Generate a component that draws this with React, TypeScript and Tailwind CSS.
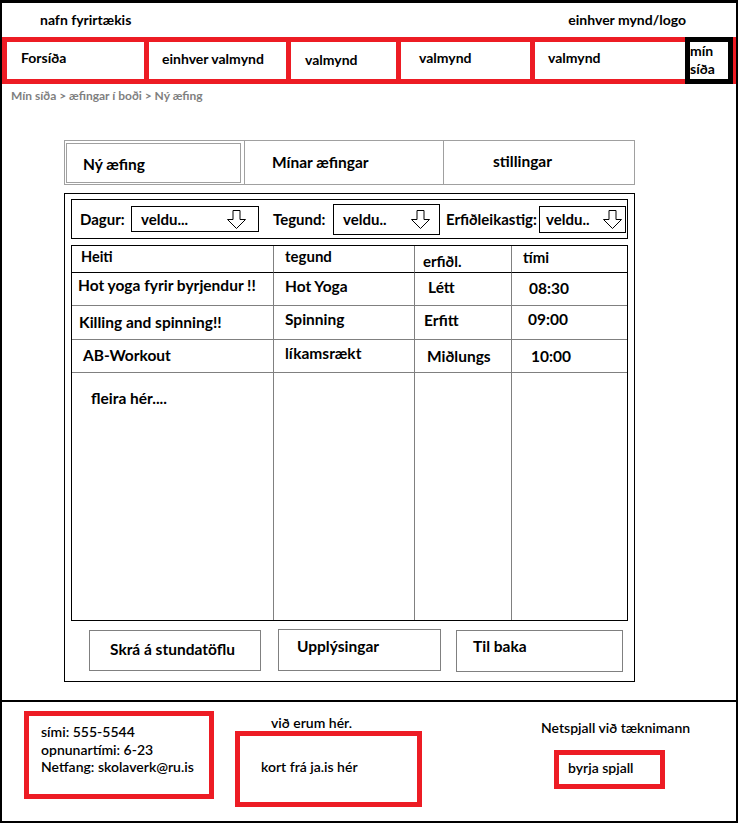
import React from "react";

function Arrow() {
  return (
    <svg width="19" height="19" viewBox="0 0 19 19" className="shrink-0">
      <polygon
        points="6,0.5 13,0.5 13,9.5 18.5,9.5 9.5,18.5 0.5,9.5 6,9.5"
        fill="white"
        stroke="black"
        strokeWidth="1"
      />
    </svg>
  );
}

type CellProps = { text?: string; cls: string };
function Cell({ text, cls }: CellProps) {
  return <div className={cls}>{text}</div>;
}

export default function App() {
  return (
    <div className="[font-family:Lato,sans-serif] font-bold text-black bg-white w-[738px] h-[823px] border-x-2 border-t-[3px] border-b-2 border-black flex flex-col text-[14px] leading-[18px]">
      {/* header */}
      <div className="h-[34px] flex items-center justify-between pl-[38px] pr-[50px]">
        <span>nafn fyrirtækis</span>
        <span>einhver mynd/logo</span>
      </div>

      {/* nav */}
      <nav className="h-[47px] bg-[#ed1c24] flex pl-[5px] pr-[3px]">
        <div className="my-[5px] w-[137px] bg-white pl-[14px] pt-[7px]">Forsíða</div>
        <div className="my-[5px] ml-[5px] w-[137px] bg-white pl-[13px] pt-[8px]">einhver valmynd</div>
        <div className="my-[5px] ml-[5px] w-[105px] bg-white pl-[14px] pt-[9px]">valmynd</div>
        <div className="my-[5px] ml-[5px] w-[129px] bg-white pl-[18px] pt-[7px]">valmynd</div>
        <div className="my-[5px] ml-[5px] w-[150px] bg-white pl-[13px] pt-[7px]">valmynd</div>
        <div className="w-[48px] bg-white border-[5px] border-black leading-[18px]">
          mín
          <br />
          síða
        </div>
      </nav>

      {/* breadcrumb */}
      <div className="mt-[4px] pl-[9px] text-[12px] leading-[16px] text-[#7f7f7f]">
        Mín síða &gt; æfingar í boði &gt; Ný æfing
      </div>

      {/* tabs */}
      <div className="mt-[36px] ml-[62px] w-[571px] h-[45px] border border-[#a0a0a0] flex shrink-0 text-[15.5px]">
        <div className="w-[179px] pl-[1px] pt-[2px] pb-[1px] pr-[3px] flex">
          <div className="flex-1 border border-[#a0a0a0] flex items-center pl-[16px] pt-[1px]">Ný æfing</div>
        </div>
        <div className="w-[199px] border-l border-[#a0a0a0] flex items-center pl-[27px] pb-[2px]">Mínar æfingar</div>
        <div className="flex-1 border-l border-[#a0a0a0] flex items-center pl-[49px] pb-[4px]">stillingar</div>
      </div>

      {/* main panel */}
      <div className="mt-[8px] ml-[62px] w-[571px] h-[489px] border border-black px-[6px] pt-[5px] flex flex-col shrink-0">
        {/* filters */}
        <div className="h-[40px] border border-black flex items-center shrink-0 text-[15px]">
          <div className="w-[59px] pl-[8px]">Dagur:</div>
          <div className="w-[128px] h-[26px] border border-black flex items-center justify-between pl-[9px] pr-[12px]">
            <span>veldu...</span>
            <Arrow />
          </div>
          <div className="w-[74px] pl-[14px]">Tegund:</div>
          <div className="w-[107px] h-[31px] border border-black flex items-center justify-between pl-[9px] pr-[9px]">
            <span>veldu..</span>
            <Arrow />
          </div>
          <div className="w-[99px] pl-[6px]">Erfiðleikastig:</div>
          <div className="w-[87px] h-[27px] border border-black flex items-center justify-between pl-[6px] pr-[3px]">
            <span>veldu..</span>
            <Arrow />
          </div>
        </div>

        {/* table */}
        <div className="mt-[6px] h-[376px] border border-black grid grid-cols-[201px_141px_97px_116px] grid-rows-[27px_33px_34px_33px_1fr] shrink-0 text-[15.5px]">
          <Cell text="Heiti" cls="text-[14.5px] border-b border-black pl-[9px] pt-[2px]" />
          <Cell text="tegund" cls="text-[15px] border-b border-l border-b-black border-l-[#808080] pl-[11px] pt-[1px]" />
          <Cell text="erfiðl." cls="text-[15px] border-b border-l border-b-black border-l-[#808080] pl-[8px] pt-[6px]" />
          <Cell text="tími" cls="text-[15px] border-b border-l border-b-black border-l-[#808080] pl-[11px] pt-[2px]" />

          <Cell text="Hot yoga fyrir byrjendur !!" cls="border-b border-[#808080] pl-[6px] pt-[3px]" />
          <Cell text="Hot Yoga" cls="border-b border-l border-[#808080] pl-[11px] pt-[4px]" />
          <Cell text="Létt" cls="border-b border-l border-[#808080] pl-[13px] pt-[5px]" />
          <Cell text="08:30" cls="border-b border-l border-[#808080] pl-[17px] pt-[6px]" />

          <Cell text="Killing and spinning!!" cls="border-b border-[#808080] pl-[7px] pt-[7px]" />
          <Cell text="Spinning" cls="border-b border-l border-[#808080] pl-[11px] pt-[4px]" />
          <Cell text="Erfitt" cls="border-b border-l border-[#808080] pl-[9px] pt-[5px]" />
          <Cell text="09:00" cls="border-b border-l border-[#808080] pl-[16px] pt-[4px]" />

          <Cell text="AB-Workout" cls="border-b border-[#808080] pl-[11px] pt-[6px]" />
          <Cell text="líkamsrækt" cls="border-b border-l border-[#808080] pl-[11px] pt-[4px]" />
          <Cell text="Miðlungs" cls="border-b border-l border-[#808080] pl-[12px] pt-[7px]" />
          <Cell text="10:00" cls="border-b border-l border-[#808080] pl-[19px] pt-[7px]" />

          <Cell text="fleira hér...." cls="pl-[19px] pt-[16px]" />
          <Cell cls="border-l border-[#808080]" />
          <Cell cls="border-l border-[#808080]" />
          <Cell cls="border-l border-[#808080]" />
        </div>

        {/* buttons */}
        <div className="mt-[8px] ml-[18px] flex items-start text-[15.5px]">
          <div className="mt-[1px] w-[172px] h-[41px] border border-[#808080] flex items-center pl-[20px] pb-[4px]">Skrá á stundatöflu</div>
          <div className="ml-[17px] w-[163px] h-[42px] border border-[#808080] flex items-center pl-[18px] pb-[8px]">Upplýsingar</div>
          <div className="ml-[15px] mt-[1px] w-[167px] h-[42px] border border-[#808080] flex items-center pl-[16px] pb-[10px]">Til baka</div>
        </div>
      </div>

      {/* footer */}
      <div className="mt-[18px] border-t-2 border-black flex items-start flex-1">
        <div className="ml-[22px] mt-[9px] w-[190px] h-[88px] border-[5px] border-[#ed1c24] pl-[12px] pt-[7px] leading-[17.5px] font-semibold">
          <div>sími: 555-5544</div>
          <div>opnunartími: 6-23</div>
          <div>Netfang: skolaverk@ru.is</div>
        </div>
        <div className="ml-[21px] mt-[13px] flex flex-col">
          <div className="pl-[36px] leading-[16px] font-semibold">við erum hér.</div>
          <div className="w-[187px] h-[76px] border-[5px] border-[#ed1c24] pl-[21px] pt-[22px] font-semibold">kort frá ja.is hér</div>
        </div>
        <div className="ml-[119px] mt-[17px] flex flex-col">
          <div className="font-semibold">Netspjall við tæknimann</div>
          <div className="ml-[13px] mt-[13px] w-[111px] h-[39px] border-[5px] border-[#ed1c24] pl-[9px] pt-[4px] font-semibold">byrja spjall</div>
        </div>
      </div>
    </div>
  );
}
